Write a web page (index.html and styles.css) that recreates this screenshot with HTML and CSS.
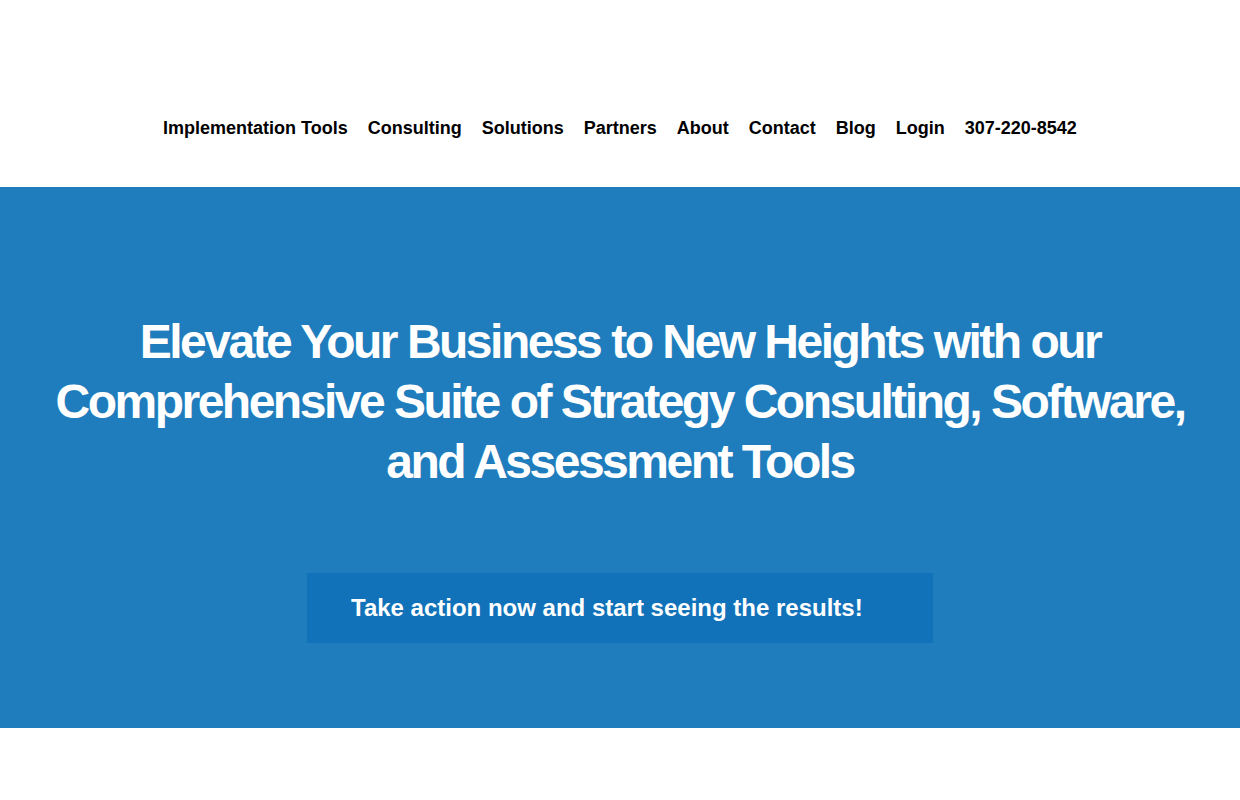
FILE: index.html
```html
<!DOCTYPE html>
<html lang="en">
<head>
    <meta charset="UTF-8">
    <meta name="viewport" content="width=device-width, initial-scale=1.0">
    <title>Strategy Consulting</title>
    <link rel="stylesheet" href="styles.css">
</head>
<body>
    <!-- Top header with main navigation -->
    <header class="site-header">
        <nav class="main-nav">
            <a href="#">Implementation Tools</a>
            <a href="#">Consulting</a>
            <a href="#">Solutions</a>
            <a href="#">Partners</a>
            <a href="#">About</a>
            <a href="#">Contact</a>
            <a href="#">Blog</a>
            <a href="#">Login</a>
            <a href="#">307-220-8542</a>
        </nav>
    </header>

    <!-- Hero banner -->
    <section class="hero">
        <h1 class="hero-title">Elevate Your Business to New Heights with our Comprehensive Suite of Strategy Consulting, Software, and Assessment Tools</h1>
        <a href="#" class="hero-button">Take action now and start seeing the results!</a>
    </section>

    <div class="page-bottom"></div>
</body>
</html>
```

FILE: styles.css
```css
* {
    margin: 0;
    padding: 0;
    box-sizing: border-box;
    font-family: "Liberation Sans", Arial, Helvetica, sans-serif;
}

body {
    background-color: #ffffff;
    color: #000000;
}

a {
    text-decoration: none;
    color: inherit;
}

/* Header */
.site-header {
    height: 187px;
    display: flex;
    align-items: flex-end;
    justify-content: center;
    padding-bottom: 46px;
}

.main-nav {
    display: flex;
    gap: 20px;
    font-size: 18px;
    font-weight: bold;
    line-height: 26px;
}

/* Hero */
.hero {
    background-color: #1f7dbd;
    height: 541px;
    padding-top: 125px;
    display: flex;
    flex-direction: column;
    align-items: center;
}

.hero-title {
    max-width: 1180px;
    color: #ffffff;
    font-size: 48px;
    line-height: 60px;
    letter-spacing: -2.5px;
    text-align: center;
}

.hero-button {
    margin-top: 81px;
    width: 626px;
    height: 70px;
    padding-left: 44px;
    display: flex;
    align-items: center;
    background-color: #1172ba;
    color: #ffffff;
    font-size: 24px;
    font-weight: bold;
}

.page-bottom {
    height: 72px;
}
```
